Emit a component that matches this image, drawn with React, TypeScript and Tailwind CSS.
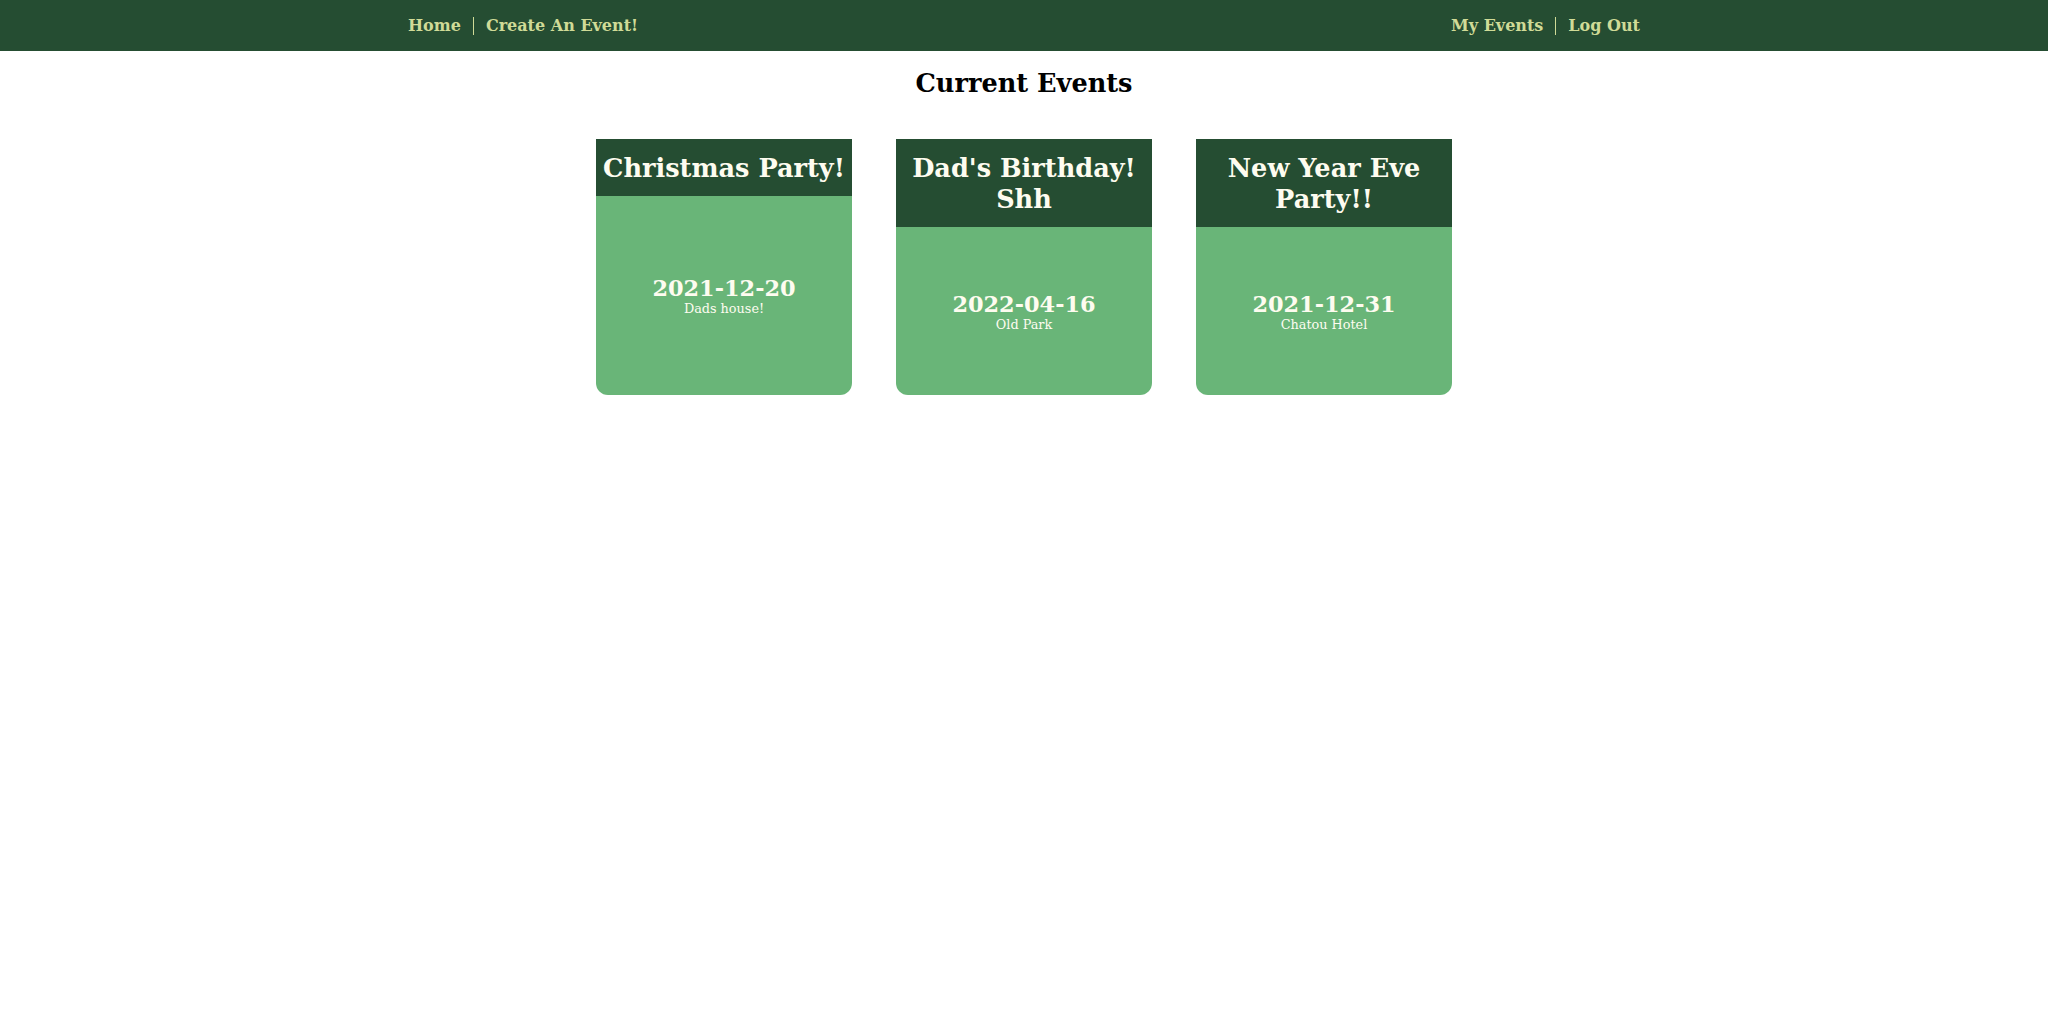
import React from "react";

const events = [
  { title: "Christmas Party!", date: "2021-12-20", location: "Dads house!" },
  { title: "Dad's Birthday! Shh", date: "2022-04-16", location: "Old Park" },
  { title: "New Year Eve Party!!", date: "2021-12-31", location: "Chatou Hotel" },
];

export default function App() {
  return (
    <div className="min-h-screen bg-white font-['DejaVu_Serif',serif]">
      <nav className="bg-[#254d32] h-[51px]">
        <div className="max-w-[1280px] mx-auto px-6 h-full flex items-center justify-between text-[16px] font-bold text-[#d0db97]">
          <div className="flex items-center">
            <a className="pr-3 border-r border-[#d0db97] leading-[18px]">Home</a>
            <a className="pl-3 leading-[18px]">Create An Event!</a>
          </div>
          <div className="flex items-center">
            <a className="pr-3 border-r border-[#d0db97] leading-[18px]">My Events</a>
            <a className="pl-3 leading-[18px]">Log Out</a>
          </div>
        </div>
      </nav>
      <h2 className="text-center text-[25.6px] font-bold text-black mt-[17px] leading-[30px]">Current Events</h2>
      <div className="flex justify-center gap-[44px] mt-[41px]">
        {events.map((e) => (
          <div key={e.title} className="w-[256px] h-[256px] flex flex-col bg-[#69b578] rounded-b-xl overflow-hidden text-[#fefcf0]">
            <div className="bg-[#254d32] px-1 pt-[14px] pb-[12px] text-center text-[25.6px] font-bold leading-[31px]">
              {e.title}
            </div>
            <div className="flex-1 flex flex-col items-center justify-center">
              <div className="text-[22.4px] font-bold leading-[26px]">{e.date}</div>
              <div className="text-[12.8px] leading-[15px]">{e.location}</div>
            </div>
          </div>
        ))}
      </div>
    </div>
  );
}
